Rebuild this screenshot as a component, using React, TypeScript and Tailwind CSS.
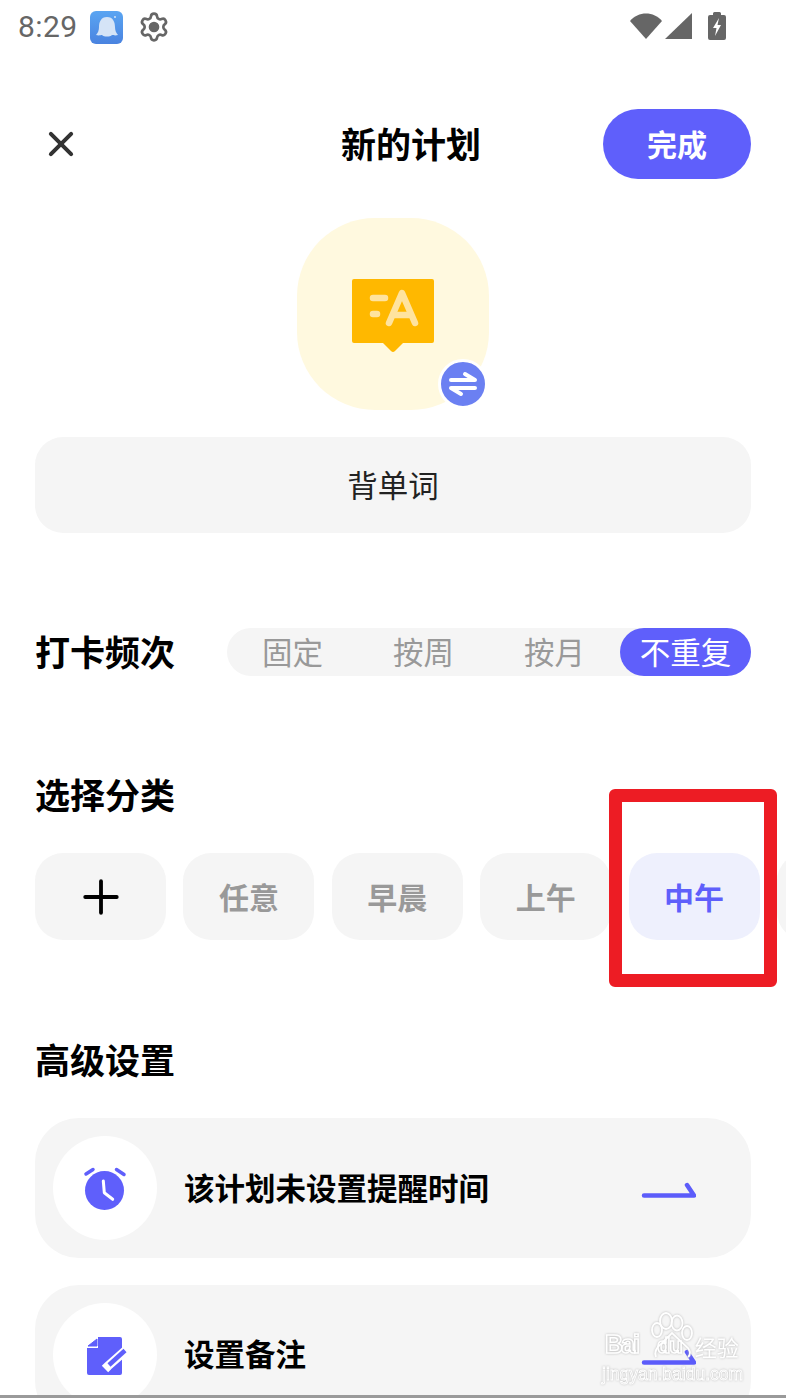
import { Settings, X, Plus } from 'lucide-react';

const chips = ['任意', '早晨', '上午', '中午'];
const tabs = ['固定', '按周', '按月', '不重复'];

function Arrow() {
  return (
    <svg width="56" height="24" viewBox="0 0 56 24" fill="none">
      <path d="M4 19.500H54L47 9" stroke="#5c5cfa" strokeWidth="4.500" strokeLinecap="round" strokeLinejoin="round" />
    </svg>
  );
}

function StatusBar() {
  return (
    <div className="h-[52px] flex items-center justify-between pl-[18px] pr-[60px] pt-[2px]">
      <div className="flex items-center">
        <span className="font-['Roboto',sans-serif] text-[30px] leading-none text-[#666666] tracking-[0.4px]">8:29</span>
        <div className="ml-[13px] w-[33px] h-[33px] rounded-[6px] bg-gradient-to-b from-[#5aa5f2] to-[#4a83e0] flex items-center justify-center">
          <svg width="26" height="26" viewBox="0 0 26 26">
            <path d="M13 3C19 3 21 8 21 13C21 16 22 19 24 21C21 22 19 21 18 21C16 23 10 23 8 21C7 21 5 22 2 21C4 19 5 16 5 13C5 8 7 3 13 3Z" fill="#d5e4f7" />
            <circle cx="21" cy="3" r="1" fill="#d5e4f7" />
          </svg>
        </div>
        <Settings className="ml-[15px] w-[32px] h-[32px] text-[#666666] [&>circle]:fill-[#666666]" strokeWidth={2} />
      </div>
      <div className="flex items-center mb-[2px]">
        <svg width="32" height="26" viewBox="0 0 32 26">
          <path d="M0 8C8-2 24-2 32 8L16 26Z" fill="#666666" />
        </svg>
        <svg className="ml-[3px]" width="27" height="26" viewBox="0 0 27 26">
          <path d="M0 26L27 0V26Z" fill="#666666" />
        </svg>
        <svg className="ml-[16px]" width="18" height="28" viewBox="0 0 18 28">
          <path d="M5 3V1.500Q5 0 6.500 0H11.500Q13 0 13 1.500V3H16Q18 3 18 5V26Q18 28 16 28H2Q0 28 0 26V5Q0 3 2 3Z" fill="#666666" />
          <path d="M11 6L5 16H8.500L7 24L13 13H9.500Z" fill="#ffffff" />
        </svg>
      </div>
    </div>
  );
}

function Row({ icon, label, mt, textShift }: { icon: React.ReactNode; label: string; mt: string; textShift: string }) {
  return (
    <div className={`${mt} h-[140px] shrink-0 rounded-[44px] bg-[#f5f5f5] flex items-center pl-[18px] pr-[55px]`}>
      <div className="w-[104px] h-[104px] rounded-full bg-white flex items-center justify-center">{icon}</div>
      <div className={`ml-[28px] flex-1 text-[30.5px] font-bold text-black leading-none -translate-x-[1px] ${textShift}`}>{label}</div>
      <Arrow />
    </div>
  );
}

export default function App() {
  return (
    <div className="relative w-[786px] h-[1398px] overflow-hidden bg-white font-['Noto_Sans_CJK_SC',sans-serif] border-b-[3px] border-b-[#9a9a9a]">
      <StatusBar />

      {/* Header */}
      <div className="mt-[57px] h-[70px] relative flex items-center justify-between pl-[46px] pr-[35px]">
        <X className="w-[30px] h-[30px] text-[#333333] scale-[1.35]" strokeWidth={2.4} />
        <div className="absolute left-[341px] top-[16px] text-[35px] font-bold text-black leading-none">新的计划</div>
        <button className="w-[148px] h-[70px] rounded-[35px] bg-[#5f5ffb] text-white text-[30px] font-bold pb-[2px]">完成</button>
      </div>

      {/* Plan icon */}
      <div className="mt-[39px] flex justify-center">
        <div className="relative w-[192px] h-[192px] rounded-[78px] bg-[#fff9df] flex items-center justify-center">
          <svg className="mt-[3px]" width="84" height="74" viewBox="0 0 84 74">
            <path d="M3 0H81Q83 0 83 2V62Q83 64 81 64H52L44 72Q42 74 40 72L32 64H3Q1 64 1 62V2Q1 0 3 0Z" fill="#ffb800" />
            <g stroke="#ffe39f" strokeWidth="6.500" strokeLinecap="round" strokeLinejoin="round" fill="none">
              <path d="M22 19H34M22 35H26" />
              <path d="M38 44L51 14L64 44M43 36H59" />
            </g>
          </svg>
          <div className="absolute left-[141px] top-[141px] w-[50px] h-[50px] rounded-full bg-[#6b80f2] border-[3px] border-white flex items-center justify-center">
            <svg width="30" height="30" viewBox="0 0 30 30" fill="none" stroke="#ffffff" strokeWidth="4" strokeLinecap="round" strokeLinejoin="round">
              <path d="M3 11H27L17 5M27 19H3L13 25" />
            </svg>
          </div>
        </div>
      </div>

      {/* Plan name */}
      <div className="mx-[35px] mt-[27px] h-[96px] rounded-[28px] bg-[#f5f5f5] flex items-center justify-center text-[30.5px] text-[#222222]">背单词</div>

      {/* Frequency */}
      <div className="mt-[95px] mx-[35px] flex items-center justify-between">
        <div className="text-[35px] font-bold text-black leading-[34px] pb-[2px]">打卡频次</div>
        <div className="w-[524px] h-[48px] rounded-[24px] bg-[#f5f5f5] grid grid-cols-4">
          {tabs.map((t, i) => (
            <div key={t} className={i === 3 ? 'rounded-[24px] bg-[#5f5ffb] text-white text-[30.5px] flex items-center justify-center' : 'text-[#999999] text-[30.5px] flex items-center justify-center'}>{t}</div>
          ))}
        </div>
      </div>

      {/* Category */}
      <div className="mt-[101px] ml-[35px] text-[35px] font-bold text-black leading-[34px]">选择分类</div>
      <div className="mt-[42px] pl-[35px] flex gap-[17.4px]">
        <div className="w-[131px] h-[87px] shrink-0 rounded-[28px] bg-[#f5f5f5] flex items-center justify-center">
          <Plus className="w-[54px] h-[54px] text-black" strokeWidth={1.7} />
        </div>
        {chips.map((c, i) => (
          <div key={c} className={i === 3 ? 'w-[131px] h-[87px] shrink-0 rounded-[28px] bg-[#eef0fd] flex items-center justify-center text-[30px] font-bold text-[#5f5ffb]' : 'w-[131px] h-[87px] shrink-0 rounded-[28px] bg-[#f5f5f5] flex items-center justify-center text-[30px] font-bold text-[#999999]'}>{c}</div>
        ))}
        {/* next chip, runs off the screen */}
        <div className="w-[131px] h-[87px] shrink-0 rounded-[28px] bg-[#f5f5f5]" />
      </div>

      {/* Advanced settings */}
      <div className="mt-[102px] ml-[35px] text-[35px] font-bold text-black leading-[34px]">高级设置</div>
      <div className="mt-[42px] mx-[35px] flex flex-col">
        <Row
          mt="mt-0"
          textShift="mb-[2px]"
          label="该计划未设置提醒时间"
          icon={
            <svg className="mt-[2px]" width="44" height="44" viewBox="0 0 44 44">
              <circle cx="21.500" cy="23.500" r="19.500" fill="#5f5ffb" />
              <path d="M3 7L10 2.500M33.500 2.500L41 7.500" stroke="#5f5ffb" strokeWidth="3.500" strokeLinecap="round" />
              <path d="M20.300 14L21.300 25.700L29.700 32.300" stroke="#ffffff" strokeWidth="3" fill="none" strokeLinecap="round" strokeLinejoin="round" />
            </svg>
          }
        />
        <Row
          mt="mt-[27px]"
          textShift="mb-[3px]"
          label="设置备注"
          icon={
            <svg className="mt-[1px] ml-[4px]" width="40" height="40" viewBox="0 0 40 40">
              <path d="M11 1H33Q35 1 35 3V37Q35 39 33 39H2Q0 39 0 37V12H11Z" fill="#5f5ffb" />
              <path d="M1 10L10 3V10Z" fill="#5f5ffb" stroke="#5f5ffb" strokeLinejoin="round" />
              <path d="M39 14L21 30L18 33" stroke="#ffffff" strokeWidth="9" strokeLinecap="butt" />
              <path d="M38 14.500L22 29" stroke="#5f5ffb" strokeWidth="4.500" />
            </svg>
          }
        />
      </div>

      {/* Red annotation box */}
      <div className="absolute left-[609px] top-[789px] w-[168px] h-[198px] border-[13px] border-[#ed1c24] rounded-[6px]" />

      {/* Watermark */}
      <div className="absolute left-[601px] top-[1310px] w-[146px] h-[75px] [filter:drop-shadow(0_0_1px_#b8b8b8)]">
        <svg className="absolute left-[49px] top-0" width="50" height="50" viewBox="0 0 50 50" fill="none" stroke="#ffffff" strokeWidth="1.800">
          <ellipse cx="16" cy="11" rx="6" ry="8" />
          <ellipse cx="27" cy="13" rx="5.500" ry="7.500" />
          <ellipse cx="7" cy="20" rx="5" ry="7" />
          <ellipse cx="37" cy="23" rx="5" ry="7" />
          <path d="M6 47Q3 40 12 33L22 23L38 38Q42 44 38 47" />
        </svg>
        <div className="absolute left-[4px] top-[22px] flex items-end font-['Liberation_Sans',sans-serif] leading-none font-bold text-transparent [-webkit-text-stroke:1.5px_#ffffff]">
          <span className="text-[25px] tracking-[-2px]">Bai</span>
          <span className="ml-[19px] text-[22px] tracking-[-1px]">du</span>
          <span className="ml-[13px] font-['Noto_Sans_CJK_SC',sans-serif] font-normal text-[22px] text-white [-webkit-text-stroke:0px]">经验</span>
        </div>
        <div className="absolute left-[1px] top-[56px] font-['Liberation_Sans',sans-serif] text-[17.5px] leading-none text-transparent [-webkit-text-stroke:0.9px_#ffffff] whitespace-nowrap">jingyan.baidu.com</div>
      </div>
    </div>
  );
}
